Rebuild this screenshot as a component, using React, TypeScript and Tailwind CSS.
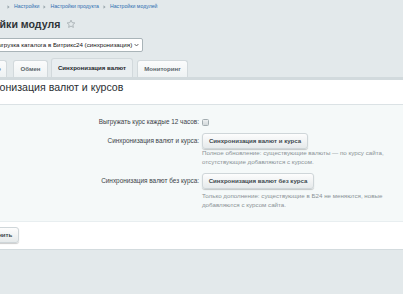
import React from "react";

function Sep() {
  return (
    <svg width="3" height="4" viewBox="0 0 3 4" className="mx-[4px] shrink-0">
      <path d="M0.5 0.3 L2.6 2 L0.5 3.7 Z" fill="#9aa6ac" />
    </svg>
  );
}

function Btn({ children, className = "" }: { children: React.ReactNode; className?: string }) {
  return (
    <div
      className={
        "h-[16px] flex items-center justify-center rounded-[3px] border border-[#cfd6d9] bg-[linear-gradient(#fdfdfd,#e6eaeb)] shadow-[0_1px_1px_rgba(0,0,0,0.2)] text-[6.1px] font-bold text-[#3c474d] whitespace-nowrap " +
        className
      }
    >
      {children}
    </div>
  );
}

export default function App() {
  return (
    <div className="w-[403px] h-[294px] overflow-hidden bg-[#e3e9eb] font-['Liberation_Sans',Arial,sans-serif] text-[#2f3a40]">
      {/* breadcrumb */}
      <div className="h-[14px] flex items-center pl-[3px] text-[5.2px] whitespace-nowrap text-[#2d6db0]">
        <Sep />
        <span>Настройки</span>
        <Sep />
        <span>Настройки продукта</span>
        <Sep />
        <span>Настройки модулей</span>
      </div>

      {/* title */}
      <div className="h-[20px] flex items-center whitespace-nowrap">
        <h1 className="ml-[-38px] text-[10.6px] leading-none font-bold text-[#2f3438]">Настройки модуля</h1>
        <svg width="10" height="10" viewBox="0 0 24 24" className="ml-[6px]">
          <path
            d="M12 2.8l2.75 5.9 6.45.75-4.8 4.4 1.3 6.35L12 17l-5.7 3.2 1.3-6.35-4.8-4.4 6.45-.75z"
            fill="none"
            stroke="#a3acb0"
            strokeWidth="2"
            strokeLinejoin="round"
          />
        </svg>
      </div>

      {/* select */}
      <div className="mt-[4px] ml-[-13px] w-[156px] h-[14px] flex items-center pl-[5px] pr-[3px] bg-white border border-[#a9b4b8] rounded-[2px] whitespace-nowrap">
        <span className="flex-1 text-[6.2px] leading-none text-[#111]">Выгрузка каталога в Битрикс24 (синхронизация)</span>
        <svg width="5" height="4" viewBox="0 0 5 4">
          <path d="M0.6 1 L2.5 3 L4.4 1" fill="none" stroke="#444" strokeWidth="0.8" />
        </svg>
      </div>

      {/* tabs */}
      <div className="mt-[6px] h-[19px] flex items-end whitespace-nowrap text-[6.1px] font-bold">
        <div className="ml-[-26px] w-[33px] h-[17px] flex items-center justify-center border border-b-0 border-[#d2d9dc] rounded-t-[3px] bg-[linear-gradient(#fbfcfc,#eef2f3)] text-[#5a656b]">
          Общие
        </div>
        <div className="ml-[6px] w-[35px] h-[17px] flex items-center justify-center border border-b-0 border-[#d2d9dc] rounded-t-[3px] bg-[linear-gradient(#fbfcfc,#eef2f3)] text-[#5a656b]">
          Обмен
        </div>
        <div className="ml-[3px] w-[82px] h-[19px] flex items-center justify-center border border-b-0 border-[#d2d9dc] rounded-t-[3px] bg-[#e9eef0] text-[#1f272b]">
          Синхронизация валют
        </div>
        <div className="ml-[4px] w-[51px] h-[17px] flex items-center justify-center border border-b-0 border-[#d2d9dc] rounded-t-[3px] bg-[linear-gradient(#fbfcfc,#eef2f3)] text-[#5a656b]">
          Мониторинг
        </div>
      </div>
      <div className="h-[3px] bg-[#d2dadd]" />

      {/* heading */}
      <div className="h-[25px] bg-white border-b border-[#dbe2e5] pt-[1px] whitespace-nowrap">
        <div className="ml-[-31px] text-[10.6px] leading-[12px] text-[#2a2f33]">Синхронизация валют и курсов</div>
      </div>

      {/* content */}
      <div className="h-[116px] bg-[#f5f9f9] pt-[12px] whitespace-nowrap text-[6.4px]">
        <div className="grid grid-cols-[199px_1fr] gap-x-[3px] items-center h-[10px]">
          <div className="text-right text-[#3a4247]">Выгружать курс каждые 12 часов:</div>
          <div className="w-[7px] h-[7px] rounded-[1.5px] border border-[#a2acb0] bg-[linear-gradient(#eceff0,#d2d8da)]" />
        </div>
        <div className="mt-[6px] grid grid-cols-[199px_1fr] gap-x-[3px] items-center">
          <div className="text-right text-[#3a4247]">Синхронизация валют и курса:</div>
          <Btn className="w-[106px]">Синхронизация валют и курса</Btn>
        </div>
        <div className="grid grid-cols-[199px_1fr] gap-x-[3px]">
          <div />
          <div className="text-[6.2px] leading-[8.5px] text-[#8a9296]">
            Полное обновление: существующие валюты — по курсу сайта,
            <br />
            отсутствующие добавляются с курсом.
          </div>
        </div>
        <div className="mt-[7px] grid grid-cols-[199px_1fr] gap-x-[3px] items-center">
          <div className="text-right text-[#3a4247]">Синхронизация валют без курса:</div>
          <Btn className="w-[112px]">Синхронизация валют без курса</Btn>
        </div>
        <div className="mt-[3px] grid grid-cols-[199px_1fr] gap-x-[3px]">
          <div />
          <div className="text-[6.2px] leading-[8.5px] text-[#8a9296]">
            Только дополнение: существующие в Б24 не меняются, новые
            <br />
            добавляются с курсом сайта.
          </div>
        </div>
      </div>

      {/* footer */}
      <div className="h-[29px] bg-white border-t border-[#e8eef0] border-b border-b-[#d3dbde] pt-[5px]">
        <Btn className="ml-[-27px] w-[46px]">Сохранить</Btn>
      </div>
    </div>
  );
}
